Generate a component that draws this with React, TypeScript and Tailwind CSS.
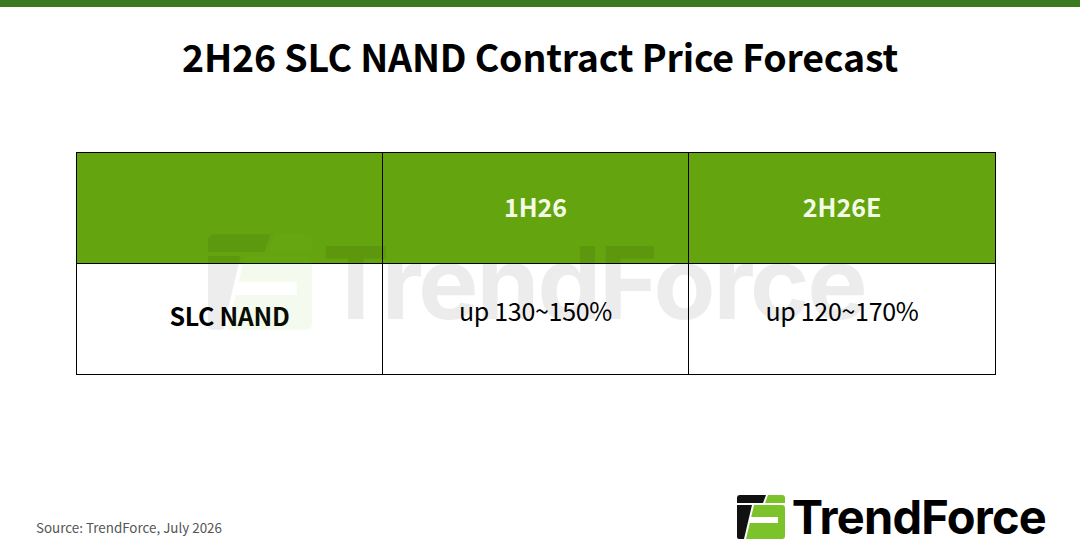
import React from 'react';

const sans = { fontFamily: '"Noto Sans CJK SC", "Noto Sans", sans-serif' };
const brand = { fontFamily: 'Inter, "Noto Sans", sans-serif' };

function LogoMark({ className }: { className?: string }) {
  return (
    <svg viewBox="0 0 48 44" className={className}>
      <path d="M3 0 H29 L26 8 H0 V3 Q0 0 3 0 Z" fill="#111111" />
      <path d="M31 0 H45 Q48 0 48 3 V8 H28 Z" fill="#7cc22b" />
      <path d="M0 10 H15 L7 44 H2 Q0 44 0 42 Z" fill="#111111" />
      <path
        d="M17 10 H45 Q48 10 48 13 V41 Q48 44 45 44 H9 L12.8 28 H41 V22 H14.2 Z"
        fill="#7cc22b"
      />
    </svg>
  );
}

export default function App() {
  return (
    <div className="relative w-[1080px] h-[560px] bg-white overflow-hidden flex flex-col" style={sans}>
      <div className="h-[7px] bg-[#3d7a1f]" />

      {/* Title */}
      <h1 className="pt-[26px] text-center text-[37.5px] leading-[46px] font-bold text-black tracking-[-0.2px]">
        2H26 SLC NAND Contract Price Forecast
      </h1>

      {/* Table */}
      <div className="ml-[76px] mt-[73px] w-[920px] border border-black grid grid-cols-[306px_306px_1fr]">
        <div className="h-[110px] bg-[#64a40f] border-r border-black" />
        <div className="h-[110px] bg-[#64a40f] border-r border-black flex items-center justify-center pb-[2px] text-[25px] font-bold text-[#f3fbe6]">
          1H26
        </div>
        <div className="h-[110px] bg-[#64a40f] flex items-center justify-center pb-[2px] text-[25px] font-bold text-[#f3fbe6]">
          2H26E
        </div>
        <div className="h-[111px] border-t border-r border-black flex items-center justify-center pb-[6px] text-[25px] font-bold text-black tracking-[-0.3px]">
          SLC NAND
        </div>
        <div className="h-[111px] border-t border-r border-black flex items-center justify-center pb-[16px] text-[25px] text-black tracking-[-0.3px]">
          up 130~150%
        </div>
        <div className="h-[111px] border-t border-black flex items-center justify-center pb-[16px] text-[25px] text-black tracking-[-0.3px]">
          up 120~170%
        </div>
      </div>

      {/* Footer */}
      <div className="mt-auto flex items-end justify-between pl-[36px] pr-[34px] pb-[18px]">
        <span className="text-[13.4px] text-[#555555] mb-[5px]">Source: TrendForce, July 2026</span>
        <div className="flex items-center gap-[7px]">
          <LogoMark className="w-[48px] h-[44px]" />
          <span className="text-[47px] leading-[50px] font-bold text-black tracking-[-0.8px]" style={brand}>
            TrendForce
          </span>
        </div>
      </div>

      {/* Watermark */}
      <div className="pointer-events-none absolute left-[208px] top-[232px] flex items-center gap-[10px] opacity-[0.07]">
        <LogoMark className="w-[104px] h-[96px]" />
        <span className="text-[101px] leading-[100px] font-bold text-black tracking-[-2px]" style={brand}>
          TrendForce
        </span>
      </div>
    </div>
  );
}
